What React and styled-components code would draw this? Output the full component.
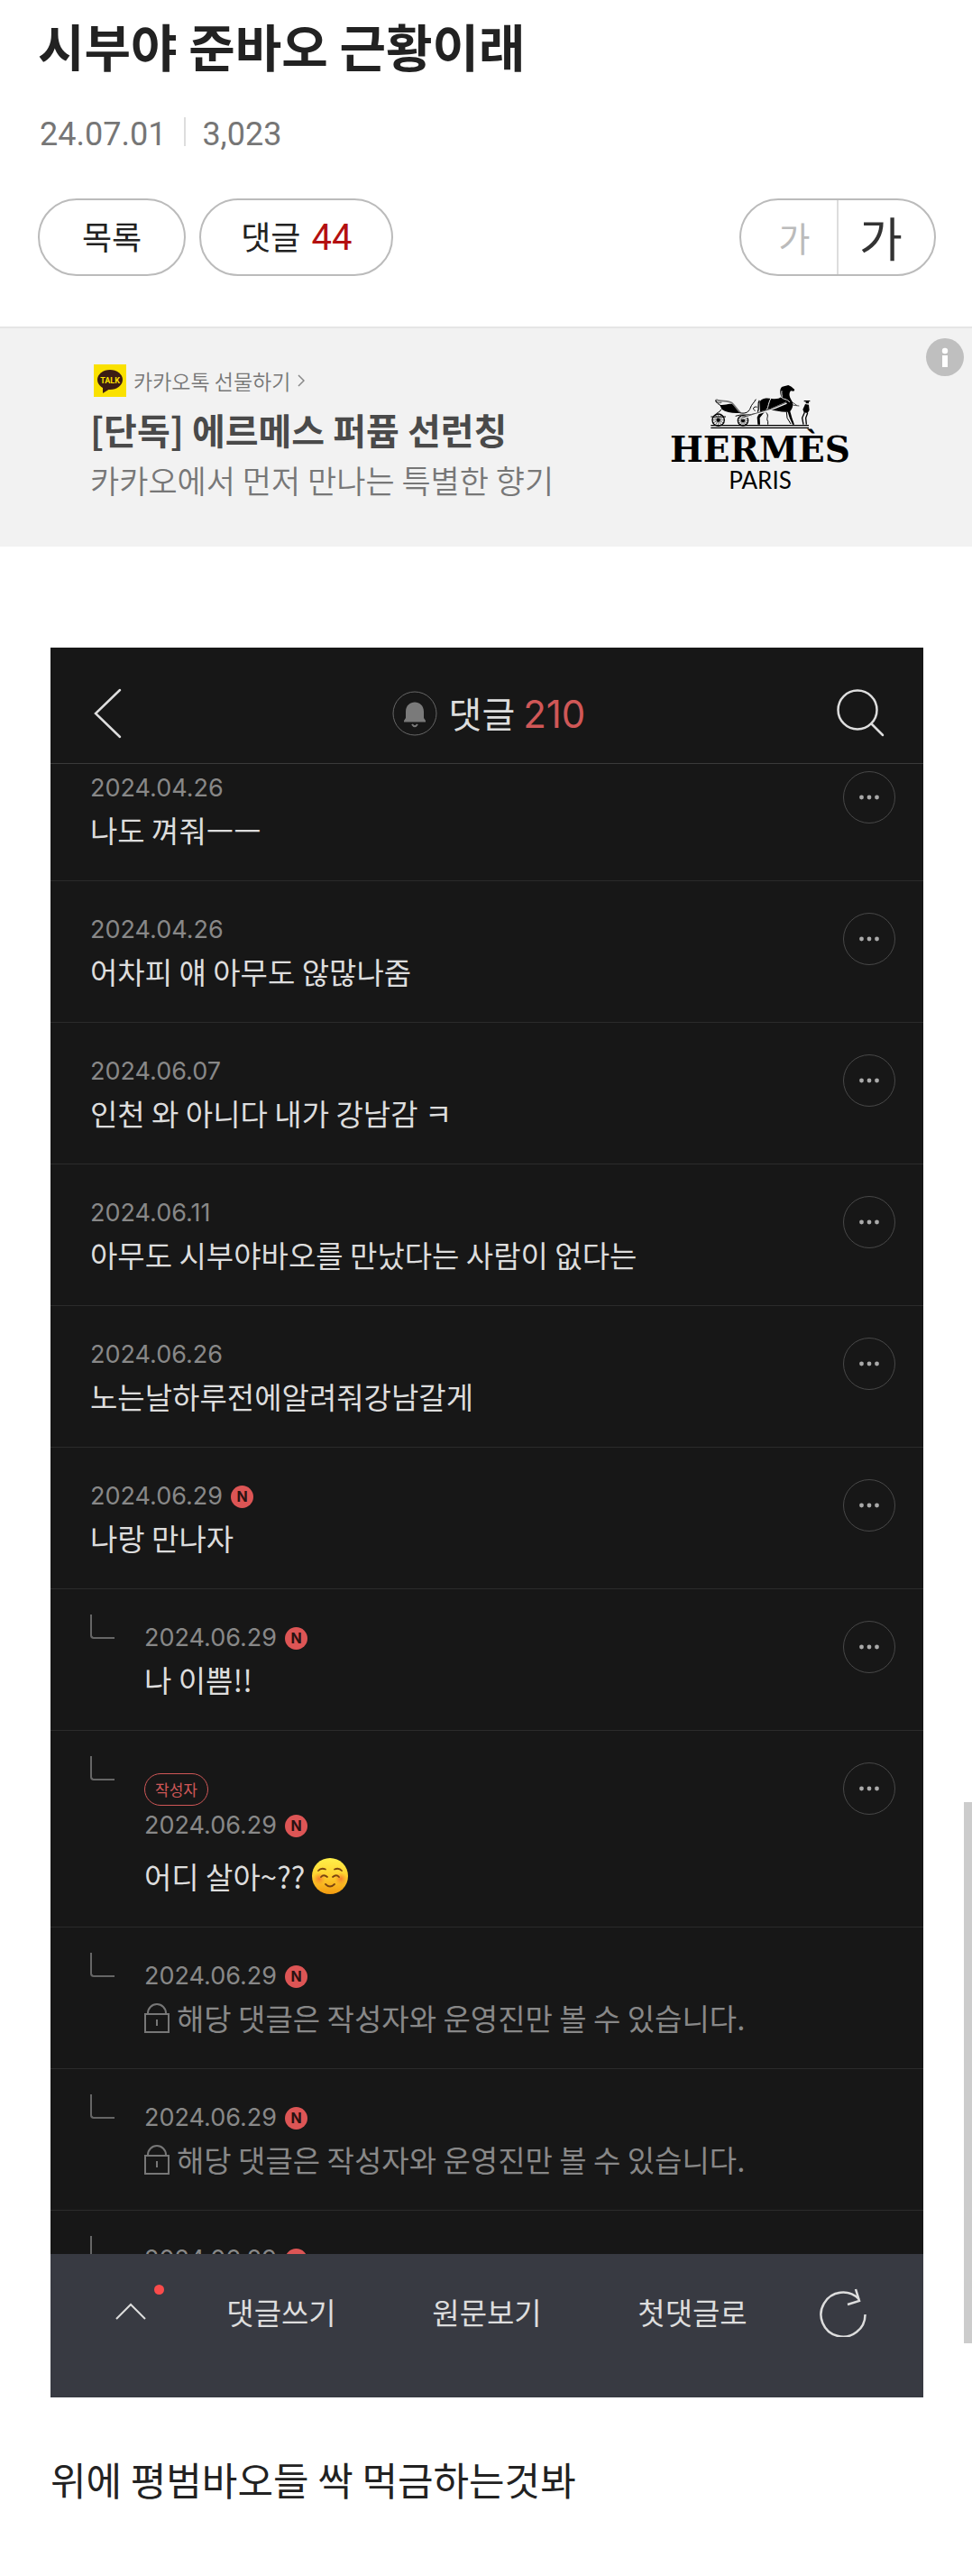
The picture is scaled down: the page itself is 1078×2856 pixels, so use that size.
import React, { useState } from "react";
import styled, { createGlobalStyle } from "styled-components";

const comments = [
	{ date: "2024.04.26", text: "나도 껴줘ㅡㅡ" },
	{ date: "2024.04.26", text: "어차피 얘 아무도 않많나줌" },
	{ date: "2024.06.07", text: "인천 와 아니다 내가 강남감 ㅋ" },
	{ date: "2024.06.11", text: "아무도 시부야바오를 만났다는 사람이 없다는" },
	{ date: "2024.06.26", text: "노는날하루전에알려줘강남갈게" },
	{ date: "2024.06.29", text: "나랑 만나자", isNew: true },
	{ date: "2024.06.29", text: "나 이쁨!!", isNew: true, reply: true },
	{
		date: "2024.06.29",
		text: "어디 살아~??",
		isNew: true,
		reply: true,
		writer: true,
		smile: true,
	},
	{
		date: "2024.06.29",
		text: "해당 댓글은 작성자와 운영진만 볼 수 있습니다.",
		isNew: true,
		reply: true,
		locked: true,
	},
	{
		date: "2024.06.29",
		text: "해당 댓글은 작성자와 운영진만 볼 수 있습니다.",
		isNew: true,
		reply: true,
		locked: true,
	},
	{ date: "2024.06.29", isNew: true, reply: true, locked: true },
];

const GlobalStyle = createGlobalStyle`
	* {
		box-sizing: border-box;
	}
	body {
		margin: 0;
		background-color: #fff;
		color: #222;
		font-family: "Noto Sans CJK KR", sans-serif;
	}
	h1, h2, p, ul {
		margin: 0;
		padding: 0;
	}
	button {
		padding: 0;
		border: 0;
		background: none;
		color: inherit;
		font: inherit;
		cursor: pointer;
	}
	a {
		color: inherit;
		text-decoration: none;
	}
	svg {
		display: block;
		flex: none;
	}
`;

const PageStyle = styled.main`
	position: relative;
`;

const PostHeader = styled.header`
	padding: 10px 40px 56px 42px;
`;

const Title = styled.h1`
	font-size: 56px;
	line-height: 80px;
	font-weight: 700;
`;

const PostInfo = styled.div`
	display: flex;
	align-items: center;
	margin: 35px 0 47px 2px;
	font-family: Roboto, sans-serif;
	font-size: 36px;
	line-height: 48px;
	color: #767676;
`;

const InfoBar = styled.span`
	width: 2px;
	height: 32px;
	margin: 0 18px 6px 20px;
	background-color: #ddd;
`;

const ButtonRow = styled.div`
	display: flex;
	align-items: center;
	gap: 15px;
`;

const PillButton = styled.button`
	height: 86px;
	padding: 0 ${(props) => props.$pad}px 4px;
	border: 2px solid #bbb;
	border-radius: 43px;
	font-size: 36px;
`;

const Count = styled.span`
	margin-left: 12px;
	font-family: Roboto, sans-serif;
	font-size: 40px;
	color: #b31010;
`;

const SizeToggle = styled.div`
	display: flex;
	height: 86px;
	margin-left: auto;
	border: 2px solid #bbb;
	border-radius: 43px;
`;

const SizeButton = styled.button`
	width: 108px;
	font-size: ${(props) => (props.$large ? 52 : 38)}px;
	line-height: 76px;
	color: ${(props) => (props.$on ? "#333" : "#bbb")};
	& + & {
		border-left: 2px solid #ddd;
		padding-right: 12px;
	}
	&:first-child {
		width: 106px;
		padding-left: 12px;
	}
`;

const Banner = styled.aside`
	position: relative;
	display: flex;
	justify-content: space-between;
	align-items: flex-start;
	padding: 40px 135px 52px 100px;
	border-top: 2px solid #e5e5e5;
	background-color: #f2f2f2;
`;

const BannerFrom = styled.p`
	display: flex;
	align-items: center;
	gap: 8px;
	margin-left: 4px;
	font-size: 23px;
	line-height: 36px;
	font-weight: 350;
	color: #777;
`;

const BannerTitle = styled.h2`
	margin: 12px 0 10px;
	font-size: 40px;
	line-height: 48px;
	color: #4a4a4a;
`;

const BannerText = styled.p`
	font-size: 35px;
	line-height: 44px;
	font-weight: 350;
	color: #777;
`;

const Brand = styled.div`
	display: flex;
	flex-direction: column;
	align-items: center;
	padding-top: 22px;
	color: #000;
`;

const BrandName = styled.span`
	font-family: "DejaVu Serif", serif;
	font-size: 39px;
	line-height: 44px;
	font-weight: 700;
`;

const BrandCity = styled.span`
	font-family: Lato, sans-serif;
	font-size: 26px;
	line-height: 24px;
`;

const InfoButton = styled.button`
	position: absolute;
	top: 11px;
	right: 9px;
`;

const PostBody = styled.article`
	padding: 112px 54px 78px 56px;
`;

const Screen = styled.section`
	display: flex;
	flex-direction: column;
	aspect-ratio: 968 / 1940;
	background-color: #171717;
	color: #ddd;
`;

const ScreenTop = styled.div`
	display: flex;
	justify-content: space-between;
	align-items: center;
	height: 129px;
	padding: 18px 42px 0 46px;
	border-bottom: 1px solid #3a3a3a;
`;

const BackButton = styled.button`
	width: 54px;
`;

const ScreenTitle = styled.h2`
	display: flex;
	align-items: center;
	gap: 13px;
	font-size: 40px;
	line-height: 50px;
	font-weight: 400;
`;

const Total = styled.span`
	font-family: Inter, sans-serif;
	font-size: 42px;
	color: #d05757;
`;

const List = styled.ul`
	flex: 1;
	min-height: 0;
	overflow: hidden;
	list-style: none;
`;

const Row = styled.li`
	display: flex;
	align-items: flex-start;
	padding: 38px 31px 36px 44px;
	border-bottom: 1px solid #2b2b2b;
	/* the list is scrolled a little under its title */
	&:first-child {
		margin-top: -27px;
	}
`;

const ReplyMark = styled.span`
	width: 27px;
	height: 27px;
	margin: -10px 33px 0 0;
	border: solid #666;
	border-width: 0 0 2px 2px;
	border-radius: 0 0 0 4px;
`;

const Content = styled.div`
	flex: 1;
`;

const WriterTag = styled.span`
	display: block;
	width: fit-content;
	margin: 9px 0 6px;
	padding: 0 11px;
	border: 1px solid #d05757;
	border-radius: 18px;
	font-size: 17px;
	line-height: 34px;
	color: #d05757;
`;

const DateLine = styled.div`
	display: flex;
	align-items: center;
	gap: 9px;
	font-family: Inter, sans-serif;
	font-size: 27px;
	line-height: 32px;
	color: #888;
`;

const NewMark = styled.span`
	width: 25px;
	height: 25px;
	border-radius: 50%;
	background-color: #dd5555;
	font-size: 16px;
	line-height: 25px;
	font-weight: 700;
	text-align: center;
	color: #2a1212;
`;

const Text = styled.p`
	display: flex;
	align-items: center;
	gap: 8px;
	margin-top: ${(props) => (props.$roomy ? 20 : 10)}px;
	font-size: 33px;
	line-height: 40px;
	color: ${(props) => (props.$locked ? "#888" : "#ddd")};
`;

const MoreButton = styled.button`
	display: flex;
	justify-content: center;
	align-items: center;
	width: 58px;
	height: 58px;
	margin-top: -3px;
	border: 1px solid #484848;
	border-radius: 50%;
`;

const BottomBar = styled.nav`
	display: grid;
	grid-template-columns: 106px 1fr 1fr 1fr 106px;
	justify-items: center;
	align-items: center;
	height: 159px;
	padding: 0 36px 32px;
	background-color: #383a42;
	font-size: 33px;
`;

const UpButton = styled.button`
	position: relative;
`;

const RedDot = styled.span`
	position: absolute;
	top: -20px;
	right: -20px;
	width: 11px;
	height: 11px;
	border-radius: 50%;
	background-color: #f94b4b;
`;

const PostText = styled.p`
	margin-top: 60px;
	font-size: 43px;
	line-height: 60px;
`;

const ScrollThumb = styled.div`
	position: absolute;
	right: 0;
	bottom: 258px;
	width: 9px;
	height: 600px;
	background-color: #ccc;
`;

function TalkIcon() {
	return (
		<svg width="36" height="36" viewBox="0 0 36 36">
			<rect width="36" height="36" fill="#fae100" />
			<ellipse cx="18" cy="17" rx="14" ry="11" fill="#3b1c14" />
			<path d="M10 25 L10 32 L18 27 Z" fill="#3b1c14" />
			<text
				x="18"
				y="21"
				textAnchor="middle"
				fontFamily="Roboto, sans-serif"
				fontSize="9"
				fontWeight="700"
				fill="#fae100"
			>
				TALK
			</text>
		</svg>
	);
}

function Wheel({ x, y, r }) {
	const spokes = [0, 30, 60, 90, 120, 150];
	return (
		<g transform={`translate(${x} ${y})`}>
			<circle r={r} fill="none" stroke="#000" strokeWidth="4" />
			{spokes.map((deg) => (
				<path
					key={deg}
					d={`M${-r} 0H${r}`}
					transform={`rotate(${deg})`}
					stroke="#000"
					strokeWidth="1.5"
				/>
			))}
			<circle r="6" />
		</g>
	);
}

function CarriageLogo() {
	return (
		<svg width="112" height="50" viewBox="0 0 336 150">
			<path d="M4 137H330M4 145H330" stroke="#000" strokeWidth="4" />
			<Wheel x={29} y={119} r={20} />
			<Wheel x={111} y={121} r={17} />
			<path d="M34 68C48 72 62 62 76 66C88 76 92 88 104 95C82 98 56 94 40 83Z" />
			<g fill="none" stroke="#000" strokeWidth="3">
				<path d="M40 60C22 66 16 52 24 52C34 58 62 54 74 62C84 70 90 84 102 94" stroke="#777" strokeWidth="5" />
				<path d="M20 54C26 68 34 66 38 74M38 84C34 96 22 92 22 102M100 95C122 100 132 90 136 78C140 66 148 62 154 50" />
				<path d="M4 108H54M86 106C104 98 130 106 150 98" />
				<path d="M152 88C138 82 150 72 158 76M140 106L150 96" />
			</g>
			<path d="M166 60C174 44 192 46 206 48C222 50 232 48 238 42C234 28 232 14 242 8L262 3L272 8L283 18L280 23L270 22C262 32 266 44 274 56C280 68 276 80 268 90L274 112L282 134H276L266 112L260 92C240 94 220 86 200 86C190 88 182 92 178 98L167 112L168 134H160L158 110L168 90Z" />
			<path d="M166 54C156 66 168 78 160 92" fill="none" stroke="#000" strokeWidth="4" />
			<path d="M188 94C200 106 186 112 194 124L194 134M256 92L258 112L270 132" fill="none" stroke="#000" strokeWidth="3" />
			<path d="M204 46C196 60 196 74 190 86M238 42C244 52 260 48 266 60M240 22C238 30 242 38 240 44" fill="none" stroke="#f2f2f2" strokeWidth="3" />
			<path d="M108 114L150 100L204 84L256 62" fill="none" stroke="#f2f2f2" strokeWidth="7" />
			<path d="M108 112L150 98L204 82L256 60L280 70L298 72M272 58L290 70" fill="none" stroke="#000" strokeWidth="2" />
			<path d="M314 54H334V58H330V64H320V58H314ZM318 66L330 68L332 86L326 96L314 94L310 84Z" />
			<path d="M316 94L308 112L312 134M326 96L320 112L322 134" fill="none" stroke="#000" strokeWidth="4" />
		</svg>
	);
}

function Smile() {
	return (
		<svg width="40" height="40" viewBox="0 0 40 40">
			<defs>
				<linearGradient id="face" x1="0" y1="0" x2="0" y2="1">
					<stop offset="0" stopColor="#fff04a" />
					<stop offset="0.5" stopColor="#ffd02e" />
					<stop offset="1" stopColor="#f29a10" />
				</linearGradient>
				<radialGradient id="cheek">
					<stop offset="0" stopColor="#f56a2c" stopOpacity="0.8" />
					<stop offset="1" stopColor="#f58a2c" stopOpacity="0" />
				</radialGradient>
			</defs>
			<circle cx="20" cy="20" r="20" fill="url(#face)" />
			<circle cx="8" cy="23" r="7" fill="url(#cheek)" />
			<circle cx="32" cy="23" r="7" fill="url(#cheek)" />
			<g fill="none" stroke="#7a4410" strokeWidth="1.8" strokeLinecap="round">
				<path d="M7 14Q10 10.500 15 12.500M33 14Q30 10.500 25 12.500" />
				<path d="M10 21Q13 17.500 17 21M23 21Q27 17.500 30 21M15 29Q20 34 25 29" />
			</g>
		</svg>
	);
}

function Lock() {
	return (
		<svg width="28" height="33" viewBox="0 0 28 33" fill="none" stroke="#777" strokeWidth="2">
			<path d="M1 12H27V32H1ZM4 12V11A10 10 0 0 1 24 11V12M14 18V25" />
		</svg>
	);
}

function Comment({ comment }) {
	const { date, text, isNew, reply, writer, smile, locked } = comment;

	return (
		<Row>
			{reply && <ReplyMark />}
			<Content>
				{writer && <WriterTag>작성자</WriterTag>}
				<DateLine>
					<time>{date}</time>
					{isNew && <NewMark>N</NewMark>}
				</DateLine>
				{text && (
					<Text $locked={locked} $roomy={writer}>
						{locked && <Lock />}
						{text}
						{smile && <Smile />}
					</Text>
				)}
			</Content>
			{!locked && (
				<MoreButton aria-label="더보기">
					<svg width="24" height="6" viewBox="0 0 24 6" fill="#aaa">
						<circle cx="3.500" cy="3" r="2.400" />
						<circle cx="12" cy="3" r="2.400" />
						<circle cx="20.500" cy="3" r="2.400" />
					</svg>
				</MoreButton>
			)}
		</Row>
	);
}

function App() {
	const [large, setLarge] = useState(true);

	return (
		<PageStyle>
			<GlobalStyle />
			<PostHeader>
				<Title>시부야 준바오 근황이래</Title>
				<PostInfo>
					<time>24.07.01</time>
					<InfoBar />
					<span>3,023</span>
				</PostInfo>
				<ButtonRow>
					<PillButton $pad={47}>목록</PillButton>
					<PillButton $pad={44}>
						댓글
						<Count>44</Count>
					</PillButton>
					<SizeToggle>
						<SizeButton $on={!large} onClick={() => setLarge(false)}>
							가
						</SizeButton>
						<SizeButton $large $on={large} onClick={() => setLarge(true)}>
							가
						</SizeButton>
					</SizeToggle>
				</ButtonRow>
			</PostHeader>

			<Banner>
				<a href="#gift">
					<BannerFrom>
						<TalkIcon />
						카카오톡 선물하기
						<svg width="8" height="14" viewBox="0 0 8 14" fill="none" stroke="#888" strokeWidth="1.5">
							<path d="M1 1L7 7L1 13" />
						</svg>
					</BannerFrom>
					<BannerTitle>[단독] 에르메스 퍼퓸 선런칭</BannerTitle>
					<BannerText>카카오에서 먼저 만나는 특별한 향기</BannerText>
				</a>
				<Brand>
					<CarriageLogo />
					<BrandName>HERMÈS</BrandName>
					<BrandCity>PARIS</BrandCity>
				</Brand>
				<InfoButton aria-label="광고 정보">
					<svg width="42" height="42" viewBox="0 0 42 42">
						<circle cx="21" cy="21" r="21" fill="#bfbfbf" />
						<circle cx="21" cy="14" r="3.200" fill="#fff" />
						<rect x="18" y="19" width="6" height="13" fill="#fff" />
					</svg>
				</InfoButton>
			</Banner>

			<PostBody>
				<Screen>
					<ScreenTop>
						<BackButton aria-label="뒤로">
							<svg width="34" height="56" viewBox="0 0 34 56" fill="none" stroke="#ddd" strokeWidth="2.500" strokeLinecap="round">
								<path d="M31 2L4 28L31 54" />
							</svg>
						</BackButton>
						<ScreenTitle>
							<svg width="50" height="50" viewBox="0 0 50 50">
								<circle cx="25" cy="25" r="24" fill="none" stroke="#666" />
								<path d="M13 34.500V33L15 30V23C15 9 35 9 35 23V30L37 33V34.500Z" fill="#7a7a7a" />
								<path d="M22 37Q25 41.500 28 37" fill="none" stroke="#7a7a7a" strokeWidth="2" />
							</svg>
							<span>
								댓글 <Total>210</Total>
							</span>
						</ScreenTitle>
						<button aria-label="검색">
							<svg width="54" height="54" viewBox="0 0 54 54" fill="none" stroke="#ddd" strokeWidth="2.500" strokeLinecap="round">
								<circle cx="23" cy="23" r="21.500" />
								<path d="M38.500 38.500L51 51" />
							</svg>
						</button>
					</ScreenTop>
					<List>
						{comments.map((comment, index) => (
							<Comment key={index} comment={comment} />
						))}
					</List>
					<BottomBar>
						<UpButton aria-label="위로">
							<svg width="34" height="20" viewBox="0 0 34 20" fill="none" stroke="#ddd" strokeWidth="2">
								<path d="M1 18L17 2L33 18" />
							</svg>
							<RedDot />
						</UpButton>
						<button>댓글쓰기</button>
						<button>원문보기</button>
						<button>첫댓글로</button>
						<button aria-label="새로고침">
							<svg width="52" height="56" viewBox="0 0 52 56" fill="none" stroke="#ddd" strokeWidth="2.500">
								<path d="M50.500 31A24.500 24.500 0 1 1 43.500 14" />
								<path d="M40 3L44 16L31 20" />
							</svg>
						</button>
					</BottomBar>
				</Screen>
				<PostText>위에 평범바오들 싹 먹금하는것봐</PostText>
			</PostBody>
			<ScrollThumb />
		</PageStyle>
	);
}

export default App;
